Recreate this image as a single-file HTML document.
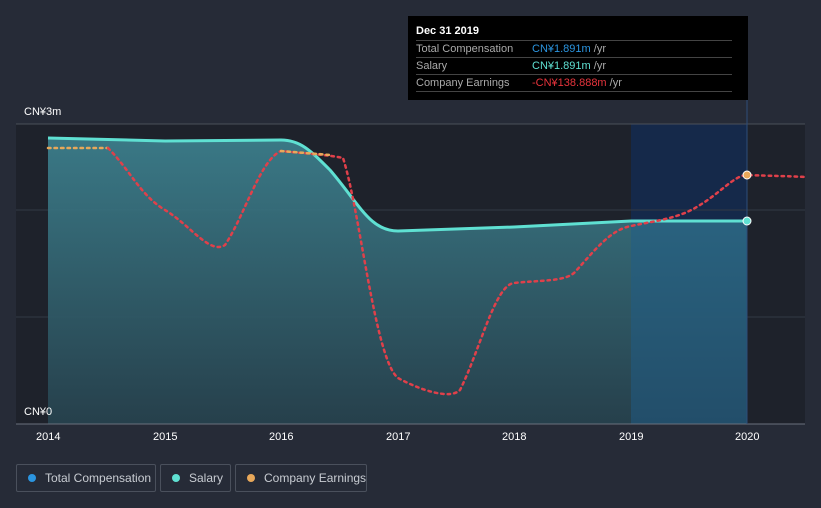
<!DOCTYPE html>
<html><head><style>
body{margin:0;background:#262b37;font-family:"Liberation Sans",sans-serif;}
.wrap{position:relative;width:821px;height:508px;overflow:hidden;}
.tt{position:absolute;left:408px;top:16px;width:340px;height:84px;background:#000;color:#fff;font-size:11px;}
.tt .h{position:absolute;left:8px;top:9px;font-weight:bold;}
.row{position:absolute;left:8px;width:316px;height:16px;border-top:1px solid #444;color:#aaa;line-height:16px;white-space:nowrap;}
.row span{position:absolute;left:116px;}
.leg{position:absolute;top:464px;height:28px;border:1px solid #4a505c;border-radius:2px;color:#c8ccd2;font-size:12px;line-height:26px;box-sizing:border-box;white-space:nowrap;}
.leg i{position:absolute;left:11px;top:9px;width:8px;height:8px;border-radius:50%;}
.leg b{font-weight:normal;position:absolute;left:28px;}
.ax{position:absolute;color:#fff;font-size:11px;}
</style></head><body><div class="wrap">
<svg width="821" height="508" style="position:absolute;left:0;top:0">
<defs><linearGradient id="g" x1="0" y1="0" x2="0" y2="1"><stop offset="0" stop-color="#3d8290"/><stop offset="1" stop-color="#27434f"/></linearGradient></defs>
<rect x="16" y="124" width="789" height="300" fill="#1e222b"/>
<rect x="631" y="124" width="116" height="300" fill="#15294a"/>
<line x1="16" y1="124" x2="805" y2="124" stroke="#4a505a"/>
<line x1="16" y1="210" x2="805" y2="210" stroke="#333944"/>
<line x1="16" y1="317" x2="805" y2="317" stroke="#333944"/>
<path d="M48,138 L165,141 L281,140 C300,140 310,150 330,170 C360,205 370,231 398,231 L514,227 L631,221 L747,221 L747,424 L48,424Z" fill="url(#g)" opacity="0.9"/>
<path d="M631,221 L747,221 L747,424 L631,424Z" fill="#1f5b86" opacity="0.5"/>
<path d="M48,138 L165,141 L281,140 C300,140 310,150 330,170 C360,205 370,231 398,231 L514,227 L631,221 L747,221" fill="none" stroke="#5fe0d2" stroke-width="3"/>
<line x1="16" y1="424" x2="805" y2="424" stroke="#6a707c"/>
<line x1="747" y1="100" x2="747" y2="424" stroke="#2d4d7a"/>
<path d="M48,148 L108,148" fill="none" stroke="#e8a85a" stroke-width="2.5" stroke-dasharray="2.5 4" stroke-linecap="round"/>
<path d="M108,148 C130,170 140,195 165,210 C190,225 210,255 225,245 C245,215 260,160 281,151 C300,153 330,155 343,158 C360,210 375,360 398,378 C420,390 450,400 460,390 C480,350 495,285 514,283 C540,280 565,282 575,272 C595,250 610,230 631,226 C660,220 680,218 700,205 C720,193 735,175 747,175 C770,176 790,176 805,177" fill="none" stroke="#e0404a" stroke-width="2.5" stroke-dasharray="2.5 4" stroke-linecap="round"/>
<path d="M281,151 L330,155" fill="none" stroke="#e8a85a" stroke-width="2.5" stroke-dasharray="2.5 4" stroke-linecap="round"/>
<circle cx="747" cy="175" r="4" fill="#e8a85a" stroke="#fff" stroke-width="1"/>
<circle cx="747" cy="221" r="4" fill="#5fe0d2" stroke="#fff" stroke-width="1"/>
</svg>
<div class="ax" style="left:24px;top:106px">CN¥3m</div>
<div class="ax" style="left:24px;top:406px">CN¥0</div>
<div class="ax" style="left:36px;top:431px">2014</div>
<div class="ax" style="left:153px;top:431px">2015</div>
<div class="ax" style="left:269px;top:431px">2016</div>
<div class="ax" style="left:386px;top:431px">2017</div>
<div class="ax" style="left:502px;top:431px">2018</div>
<div class="ax" style="left:619px;top:431px">2019</div>
<div class="ax" style="left:735px;top:431px">2020</div>
<div class="tt"><div class="h">Dec 31 2019</div>
<div class="row" style="top:24px">Total Compensation<span><b style="color:#2b95e0;font-weight:normal">CN¥1.891m</b> /yr</span></div>
<div class="row" style="top:41px">Salary<span><b style="color:#5fe0d2;font-weight:normal">CN¥1.891m</b> /yr</span></div>
<div class="row" style="top:58px;border-bottom:1px solid #444">Company Earnings<span><b style="color:#e8343c;font-weight:normal">-CN¥138.888m</b> /yr</span></div>
</div>
<div class="leg" style="left:16px;width:140px"><i style="background:#2b95e0"></i><b>Total Compensation</b></div>
<div class="leg" style="left:160px;width:71px"><i style="background:#5fe0d2"></i><b>Salary</b></div>
<div class="leg" style="left:235px;width:132px"><i style="background:#e8a85a"></i><b>Company Earnings</b></div>
</div></body></html>
